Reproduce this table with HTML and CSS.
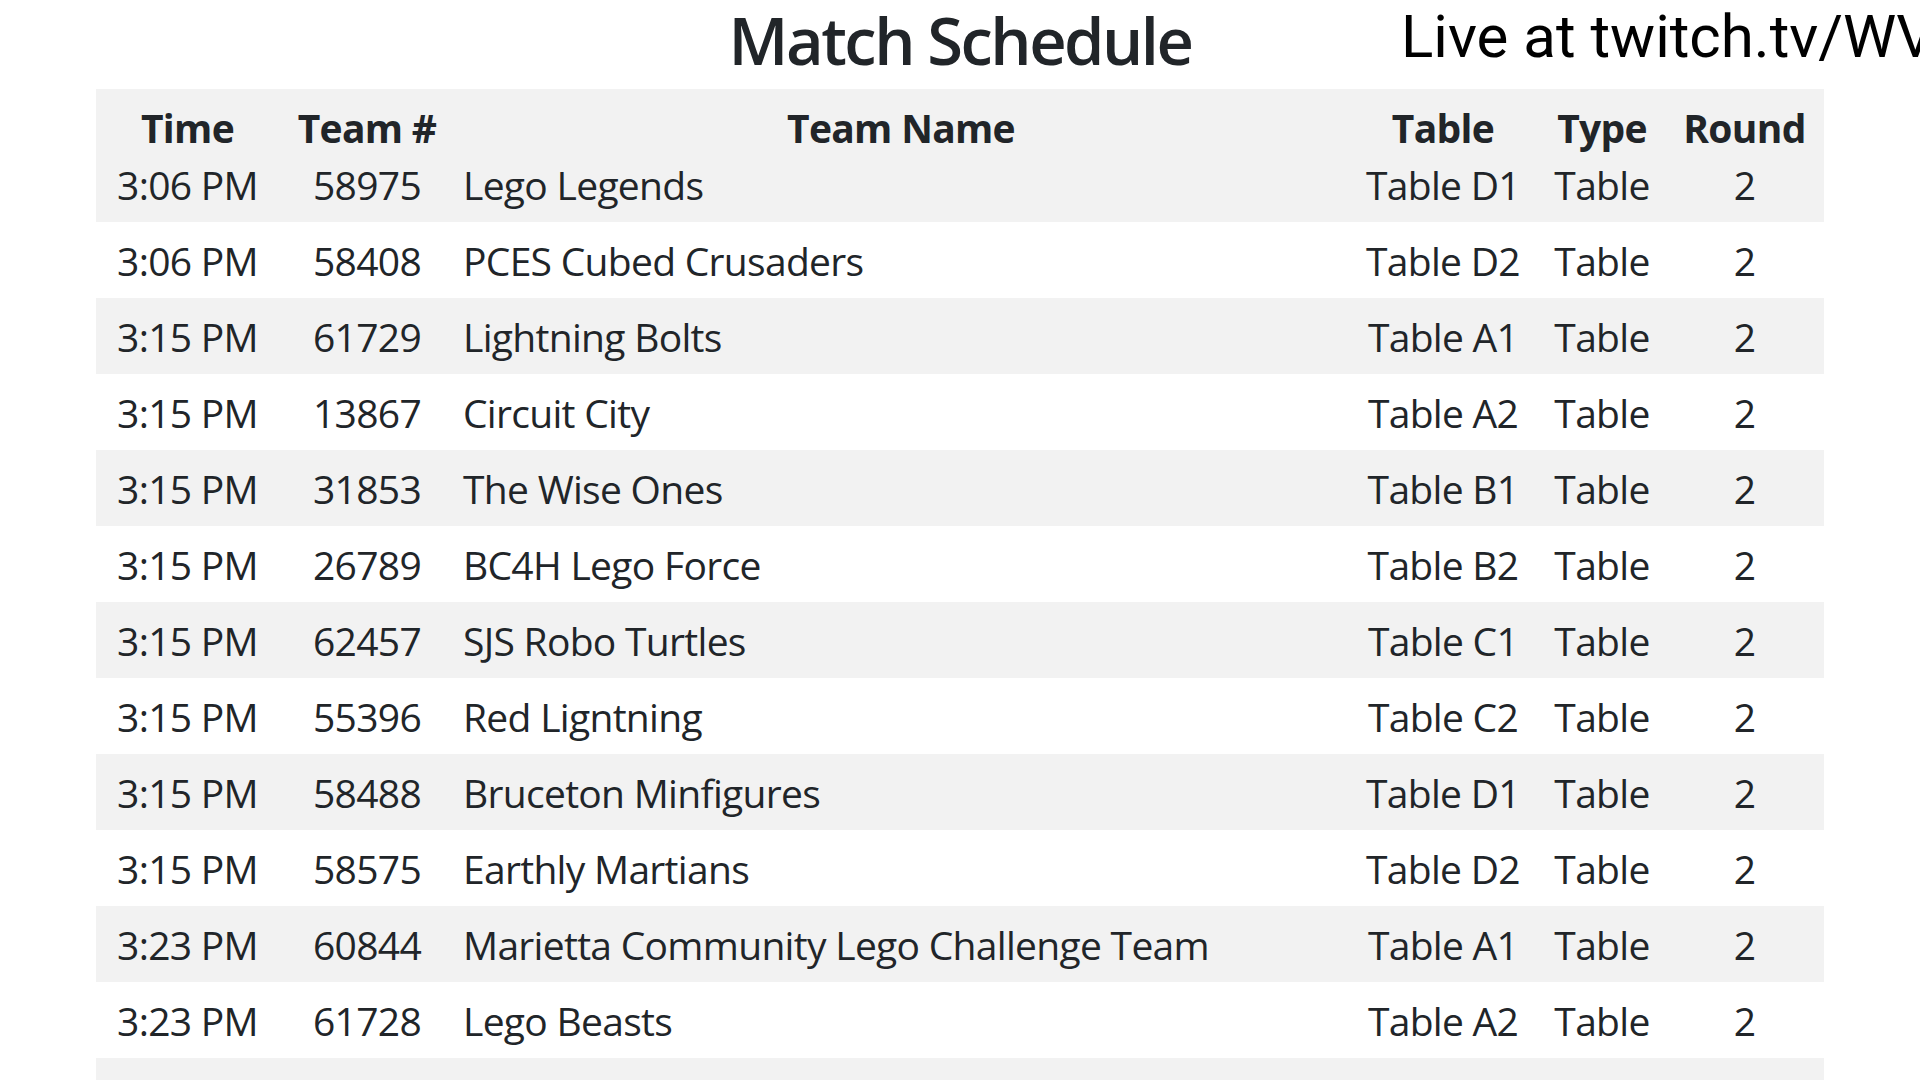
FILE: index.html
```html
<!DOCTYPE html>
<html lang="en">

<head>
    <meta charset="UTF-8">
    <meta name="viewport" content="width=device-width, initial-scale=1.0">
    <title>Match Schedule</title>
    <link rel="stylesheet" href="styles.css">
</head>

<body>
    <div class="live">Live at twitch.tv/WVFLL</div>

    <div class="page">
        <h1 class="title">Match Schedule</h1>

        <table class="schedule">
            <colgroup>
                <col class="c-time">
                <col class="c-num">
                <col>
                <col class="c-table">
                <col class="c-type">
                <col class="c-round">
            </colgroup>
            <thead>
                <tr>
                    <th>Time</th>
                    <th>Team #</th>
                    <th>Team Name</th>
                    <th>Table</th>
                    <th>Type</th>
                    <th>Round</th>
                </tr>
            </thead>
            <tbody>
                <tr><td>3:06 PM</td><td>58975</td><td class="name">Lego Legends</td><td>Table D1</td><td>Table</td><td>2</td></tr>
                <tr><td>3:06 PM</td><td>58408</td><td class="name">PCES Cubed Crusaders</td><td>Table D2</td><td>Table</td><td>2</td></tr>
                <tr><td>3:15 PM</td><td>61729</td><td class="name">Lightning Bolts</td><td>Table A1</td><td>Table</td><td>2</td></tr>
                <tr><td>3:15 PM</td><td>13867</td><td class="name">Circuit City</td><td>Table A2</td><td>Table</td><td>2</td></tr>
                <tr><td>3:15 PM</td><td>31853</td><td class="name">The Wise Ones</td><td>Table B1</td><td>Table</td><td>2</td></tr>
                <tr><td>3:15 PM</td><td>26789</td><td class="name">BC4H Lego Force</td><td>Table B2</td><td>Table</td><td>2</td></tr>
                <tr><td>3:15 PM</td><td>62457</td><td class="name">SJS Robo Turtles</td><td>Table C1</td><td>Table</td><td>2</td></tr>
                <tr><td>3:15 PM</td><td>55396</td><td class="name">Red Ligntning</td><td>Table C2</td><td>Table</td><td>2</td></tr>
                <tr><td>3:15 PM</td><td>58488</td><td class="name">Bruceton Minfigures</td><td>Table D1</td><td>Table</td><td>2</td></tr>
                <tr><td>3:15 PM</td><td>58575</td><td class="name">Earthly Martians</td><td>Table D2</td><td>Table</td><td>2</td></tr>
                <tr><td>3:23 PM</td><td>60844</td><td class="name">Marietta Community Lego Challenge Team</td><td>Table A1</td><td>Table</td><td>2</td></tr>
                <tr><td>3:23 PM</td><td>61728</td><td class="name">Lego Beasts</td><td>Table A2</td><td>Table</td><td>2</td></tr>
                <tr><td></td><td></td><td></td><td></td><td></td><td></td></tr>
            </tbody>
        </table>
    </div>
</body>

</html>
```

FILE: styles.css
```css
body {
    margin: 0;
    width: 1920px;
    height: 1080px;
    overflow: hidden;
    position: relative;
    background: #fff;
    color: #212529;
    font-family: "Open Sans", "Liberation Sans", sans-serif;
}

.page {
    padding: 0 96px;
}

.title {
    margin: 0;
    height: 89px;
    font-size: 65px;
    line-height: 80px;
    font-weight: 600;
    letter-spacing: -2.5px;
    text-align: center;
}

/* stream overlay, sits on top of the page */
.live {
    position: absolute;
    left: 1401px;
    top: 2px;
    white-space: nowrap;
    font-family: Roboto, "Open Sans", sans-serif;
    font-size: 60px;
    line-height: 70px;
    color: #000;
}

.schedule {
    width: 100%;
    table-layout: fixed;
    border-collapse: collapse;
    font-size: 39px;
    letter-spacing: -0.7px;
}

.c-time { width: 183px; }
.c-num { width: 176px; }
.c-table { width: 192px; }
.c-type { width: 126px; }
.c-round { width: 159px; }

.schedule thead tr {
    background: #f2f2f2;
}

.schedule th {
    height: 57px;
    padding: 21px 0 0;
    box-sizing: border-box;
    vertical-align: top;
    line-height: 36px;
    font-weight: 700;
    text-align: center;
    white-space: nowrap;
}

.schedule td {
    height: 76px;
    padding: 2px 0 0;
    box-sizing: border-box;
    line-height: 40px;
    vertical-align: middle;
    text-align: center;
    white-space: nowrap;
}

.schedule td.name {
    text-align: left;
    padding-left: 8px;
}

.schedule tbody tr:nth-child(odd) {
    background: #f2f2f2;
}
```
